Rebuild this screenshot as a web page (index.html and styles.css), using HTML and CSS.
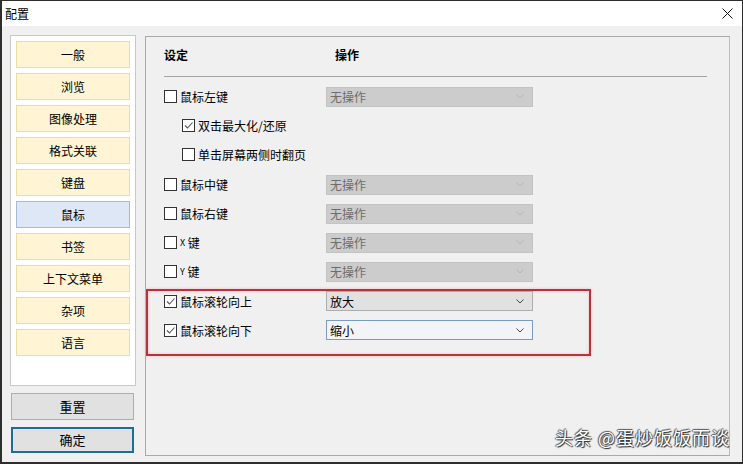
FILE: index.html
```html
<!DOCTYPE html>
<html lang="zh-CN">
<head>
    <meta charset="UTF-8">
    <title>配置</title>
    <link rel="stylesheet" href="styles.css">
</head>
<body>
    <div class="window">
        <div class="titlebar">
            <span class="title">配置</span>
            <svg class="close" width="11" height="11" viewBox="0 0 11 11"><path d="M0.5 0.5L10.5 10.5M10.5 0.5L0.5 10.5" stroke="#111" stroke-width="1" fill="none"/></svg>
        </div>
        <div class="main">
            <div class="sidebar">
                <div class="nav">
                    <div class="nav-item">一般</div>
                    <div class="nav-item">浏览</div>
                    <div class="nav-item">图像处理</div>
                    <div class="nav-item">格式关联</div>
                    <div class="nav-item">键盘</div>
                    <div class="nav-item active">鼠标</div>
                    <div class="nav-item">书签</div>
                    <div class="nav-item">上下文菜单</div>
                    <div class="nav-item">杂项</div>
                    <div class="nav-item">语言</div>
                </div>
                <div class="btn">重置</div>
                <div class="btn primary">确定</div>
            </div>

            <div class="panel">
                <div class="head">
                    <span class="head-set">设定</span>
                    <span class="head-op">操作</span>
                </div>
                <div class="rule"></div>

                <div class="row">
                    <label class="check"><span class="box"></span>鼠标左键</label>
                    <div class="select disabled">无操作<svg class="chev" width="8" height="5" viewBox="0 0 8 5"><path d="M0.5 0.5L4 4L7.5 0.5" stroke="#b4b4b4" fill="none"/></svg></div>
                </div>
                <div class="row sub">
                    <label class="check"><span class="box on"><svg width="11" height="11" viewBox="0 0 11 11"><path d="M2 5.5L4.5 8L9.5 2.5" stroke="#555" stroke-width="1.1" fill="none"/></svg></span>双击最大化/还原</label>
                </div>
                <div class="row sub">
                    <label class="check"><span class="box"></span>单击屏幕两侧时翻页</label>
                </div>
                <div class="row gap">
                    <label class="check"><span class="box"></span>鼠标中键</label>
                    <div class="select disabled">无操作<svg class="chev" width="8" height="5" viewBox="0 0 8 5"><path d="M0.5 0.5L4 4L7.5 0.5" stroke="#b4b4b4" fill="none"/></svg></div>
                </div>
                <div class="row">
                    <label class="check"><span class="box"></span>鼠标右键</label>
                    <div class="select disabled">无操作<svg class="chev" width="8" height="5" viewBox="0 0 8 5"><path d="M0.5 0.5L4 4L7.5 0.5" stroke="#b4b4b4" fill="none"/></svg></div>
                </div>
                <div class="row">
                    <label class="check"><span class="box"></span><span class="key">X</span>&nbsp;键</label>
                    <div class="select disabled">无操作<svg class="chev" width="8" height="5" viewBox="0 0 8 5"><path d="M0.5 0.5L4 4L7.5 0.5" stroke="#b4b4b4" fill="none"/></svg></div>
                </div>
                <div class="row">
                    <label class="check"><span class="box"></span><span class="key">Y</span>&nbsp;键</label>
                    <div class="select disabled">无操作<svg class="chev" width="8" height="5" viewBox="0 0 8 5"><path d="M0.5 0.5L4 4L7.5 0.5" stroke="#b4b4b4" fill="none"/></svg></div>
                </div>

                <div class="highlight">
                    <div class="row tight">
                        <label class="check"><span class="box on"><svg width="11" height="11" viewBox="0 0 11 11"><path d="M2 5.5L4.5 8L9.5 2.5" stroke="#555" stroke-width="1.1" fill="none"/></svg></span>鼠标滚轮向上</label>
                        <div class="select">放大<svg class="chev" width="8" height="5" viewBox="0 0 8 5"><path d="M0.5 0.5L4 4L7.5 0.5" stroke="#444" fill="none"/></svg></div>
                    </div>
                    <div class="row tight">
                        <label class="check"><span class="box on"><svg width="11" height="11" viewBox="0 0 11 11"><path d="M2 5.5L4.5 8L9.5 2.5" stroke="#555" stroke-width="1.1" fill="none"/></svg></span>鼠标滚轮向下</label>
                        <div class="select focus">缩小<svg class="chev" width="8" height="5" viewBox="0 0 8 5"><path d="M0.5 0.5L4 4L7.5 0.5" stroke="#444" fill="none"/></svg></div>
                    </div>
                </div>
            </div>
        </div>
        <div class="watermark">头条 @蛋炒饭饭而谈</div>
    </div>
</body>
</html>
```

FILE: styles.css
```css
html, body { margin: 0; padding: 0; }
body { font-family: "Noto Sans CJK SC", "Noto Sans", sans-serif; font-size: 12px; color: #000; background: #2b2b2b; }

.window { position: relative; width: 743px; height: 464px; box-sizing: border-box; background: #f0f0f0; border: 1px solid #2e2e2e; border-left-width: 2px; border-bottom-width: 2px; display: flex; flex-direction: column; }
.titlebar { height: 25px; background: #fff; display: flex; align-items: center; justify-content: space-between; padding: 0 9px 0 3px; }
.title { font-size: 12px; line-height: 25px; }

.main { display: flex; padding: 9px 0 0 8px; gap: 9px; }

.sidebar { width: 126px; display: flex; flex-direction: column; }
.nav { height: 351px; box-sizing: border-box; background: #fff; border: 1px solid #c9c9c9; padding: 5px; }
.nav-item { height: 27px; box-sizing: border-box; margin-bottom: 5px; background: #fff4d4; border: 1px solid #eadca8; text-align: center; line-height: 25px; }
.nav-item.active { background: #dde7f5; border-color: #a8b9d4; }

.btn { margin: 7px 0 0 1px; width: 123px; height: 27px; box-sizing: border-box; background: #e1e1e1; border: 1px solid #adadad; text-align: center; line-height: 25px; font-size: 13px; }
.btn.primary { height: 26px; border: 2px solid #1f6c99; line-height: 22px; }

.panel { width: 585px; height: 420px; box-sizing: border-box; margin-top: 1px; border: 1px solid #a9a9a9; border-right-color: #bdbdbd; padding: 0 0 0 18px; }
.head { height: 34px; display: flex; align-items: center; font-weight: bold; }
.head-set { width: 171px; }
.rule { width: 543px; height: 1px; background: #a3a3a3; margin: 5px 0 5px; }

.row { height: 29px; display: flex; align-items: center; }
.row.sub { padding-left: 18px; }
.row.gap { margin-top: 1px; }
.check { width: 162px; display: flex; align-items: center; }
.box { width: 11px; height: 11px; border: 1px solid #333; background: #fff; margin-right: 3px; display: flex; }
.key { font-size: 9px; }

.select { width: 207px; height: 20px; box-sizing: border-box; border: 1px solid #adadad; background: #e1e1e1; display: flex; align-items: center; justify-content: space-between; padding: 0 8px 0 3px; }
.select.disabled { background: #cccccc; border-color: #c3c3c3; color: #6d6d6d; }
.select.focus { background: #f2f4f7; border-color: #7a9cc0; }

.highlight { margin: 3px 0 0 -18px; width: 445px; box-sizing: border-box; border: 2px solid #b4343c; box-shadow: 0 0 3px #f2b8bb, inset 0 0 3px #f2b8bb; padding: 0 0 14px 16px; }
.row.tight { height: 20px; margin-bottom: 9px; }
.row.tight:last-child { margin-bottom: 0; }

.watermark { position: absolute; right: 12px; bottom: 12px; font-size: 18px; color: #fff; letter-spacing: 1px; text-shadow: 1px 1px 1px #222, -1px 0 1px #444, 0 -1px 1px #555; }
```
